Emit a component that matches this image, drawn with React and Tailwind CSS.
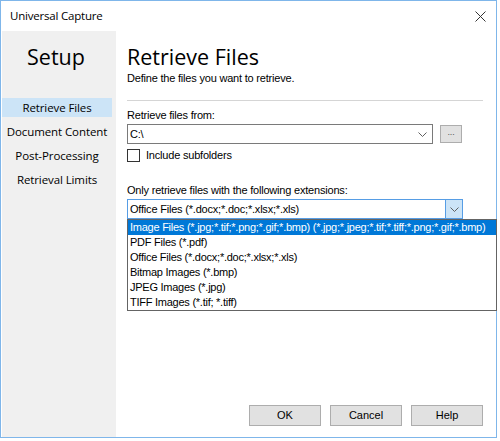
import React from "react";

const nav = ["Retrieve Files", "Document Content", "Post-Processing", "Retrieval Limits"];

const extensions = [
  "Image Files (*.jpg;*.tif;*.png;*.gif;*.bmp) (*.jpg;*.jpeg;*.tif;*.tiff;*.png;*.gif;*.bmp)",
  "PDF Files (*.pdf)",
  "Office Files (*.docx;*.doc;*.xlsx;*.xls)",
  "Bitmap Images (*.bmp)",
  "JPEG Images (*.jpg)",
  "TIFF Images (*.tif; *.tiff)",
];

const ui = { fontFamily: '"Open Sans", "Noto Sans", sans-serif' };
const ms = { fontFamily: '"Liberation Sans", Arial, sans-serif' };

function Chevron() {
  return (
    <svg width="9" height="5" viewBox="0 0 9 5" fill="none">
      <path d="M0.5 0.5 L4.5 4.5 L8.5 0.5" stroke="#606060" strokeWidth="1" />
    </svg>
  );
}

export default function App() {
  return (
    <div className="w-[500px] h-[441px] bg-white relative overflow-hidden text-black">
      <div className="w-[497px] h-[438px] border border-[#7fb6ea] flex flex-col bg-white">
        {/* title bar */}
        <div className="h-[30px] flex items-center justify-between pl-[9px] pr-[10px]" style={ui}>
          <span className="text-[11.5px] tracking-[-0.2px]">Universal Capture</span>
          <svg width="11" height="11" viewBox="0 0 11 11">
            <path d="M0.5 0.5 L10.5 10.5 M10.5 0.5 L0.5 10.5" stroke="#333" strokeWidth="1" />
          </svg>
        </div>

        <div className="flex flex-1 pl-[1px]">
          {/* left panel */}
          <div className="w-[114px] bg-[#f0f0f0] pt-[12px] flex flex-col" style={ui}>
            <div className="h-[28px] leading-[28px] text-[21.5px] text-center pr-[6px]">Setup</div>
            <div className="mt-[27px] flex flex-col gap-[5px]">
              {nav.map((n, i) => (
                <div
                  key={n}
                  className={`w-[110px] h-[19px] leading-[19px] text-[11.5px] tracking-[-0.1px] text-center ${i === 0 ? "bg-[#cce4f7]" : ""}`}
                >
                  {n}
                </div>
              ))}
            </div>
          </div>

          {/* content */}
          <div className="flex-1 flex flex-col pl-[11px] pr-[13px] pt-[12px] pb-[11px] relative tracking-[-0.2px]">
            <div className="h-[28px] leading-[28px] text-[21.5px] tracking-normal" style={ui}>Retrieve Files</div>
            <div className="h-[14px] leading-[14px] text-[11px]" style={ms}>Define the files you want to retrieve.</div>
            <div className="mt-[15px] h-px bg-[#d5d5d5] w-[356px]" />

            <div className="mt-[7px] h-[14px] leading-[14px] text-[11px]" style={ms}>Retrieve files from:</div>
            <div className="mt-[2px] flex items-center gap-[7px]">
              <div className="w-[306px] h-[20px] border border-[#7a7a7a] bg-white flex items-center justify-between pl-[2px] pr-[5px] text-[11px]" style={ms}>
                <span>C:\</span>
                <Chevron />
              </div>
              <div className="w-[22px] h-[18px] border border-[#adadad] bg-[#e1e1e1] flex items-center justify-center text-[9px] text-[#555] leading-none pb-[3px]" style={ms}>
                ...
              </div>
            </div>
            <div className="mt-[5px] flex items-center gap-[6px] h-[13px]">
              <div className="w-[13px] h-[13px] border border-[#333] bg-white" />
              <span className="text-[11px]" style={ms}>Include subfolders</span>
            </div>

            <div className="mt-[21px] h-[14px] leading-[14px] text-[11px]" style={ms}>Only retrieve files with the following extensions:</div>
            <div className="mt-[2px] relative w-[336px]">
              <div className="h-[20px] border border-[#569de5] bg-white flex items-center text-[11px]" style={ms}>
                <span className="flex-1 pl-[2px]">Office Files (*.docx;*.doc;*.xlsx;*.xls)</span>
                <div className="w-[17px] h-full bg-[#cce4f7] border-l border-[#569de5] flex items-center justify-center">
                  <Chevron />
                </div>
              </div>
              {/* open dropdown list */}
              <div className="absolute left-0 top-[20px] w-[370px] border border-[#646464] bg-white z-10" style={ms}>
                {extensions.map((e, i) => (
                  <div
                    key={e}
                    className={`h-[15px] leading-[15px] text-[11px] pl-[2px] whitespace-nowrap tracking-[-0.25px] ${i === 0 ? "bg-[#0078d7] text-white" : ""}`}
                  >
                    {e}
                  </div>
                ))}
              </div>
            </div>

            <div className="mt-auto flex justify-end gap-[9px] tracking-normal" style={ms}>
              {["OK", "Cancel", "Help"].map((b) => (
                <div
                  key={b}
                  className="w-[72px] h-[21px] border border-[#adadad] bg-[#e1e1e1] flex items-center justify-center text-[11px]"
                >
                  {b}
                </div>
              ))}
            </div>
          </div>
        </div>
      </div>
    </div>
  );
}
